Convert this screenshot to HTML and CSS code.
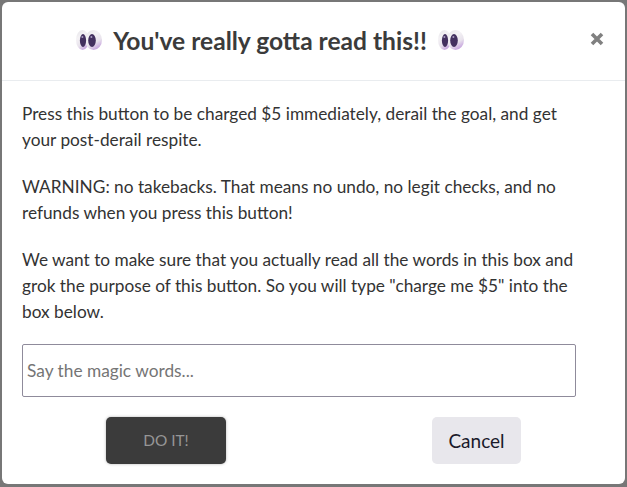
FILE: index.html
```html
<!DOCTYPE html>
<html lang="en">
<head>
    <meta charset="UTF-8">
    <meta name="viewport" content="width=device-width, initial-scale=1.0">
    <title>You've really gotta read this!!</title>
    <link rel="stylesheet" href="styles.css">
</head>
<body>

    <svg class="defs" width="0" height="0">
        <defs>
            <linearGradient id="eyeball" x1="0.1" y1="0" x2="0.6" y2="1">
                <stop offset="0" stop-color="#e6e4e8"/>
                <stop offset="0.35" stop-color="#f4f2f5"/>
                <stop offset="0.7" stop-color="#e8e2ec"/>
                <stop offset="1" stop-color="#c6a3de"/>
            </linearGradient>
            <symbol id="eyes" viewBox="0 0 26 20">
                <ellipse cx="6.5" cy="10" rx="6.5" ry="10" fill="url(#eyeball)"/>
                <ellipse cx="17.5" cy="10" rx="8.5" ry="10" fill="url(#eyeball)"/>
                <ellipse cx="7" cy="10.5" rx="3.1" ry="6.5" fill="#43305f"/>
                <ellipse cx="16" cy="10.5" rx="3.8" ry="6.5" fill="#43305f"/>
                <circle cx="6.4" cy="7" r="1" fill="#a99cc0"/>
                <circle cx="15.4" cy="7" r="1" fill="#a99cc0"/>
            </symbol>
        </defs>
    </svg>

    <div class="modal">
        <div class="modal-header">
            <h1>
                <svg class="eyes"><use href="#eyes"/></svg>
                <span>You've really gotta read this!!</span>
                <svg class="eyes"><use href="#eyes"/></svg>
            </h1>
            <button class="close">
                <svg width="14" height="14" viewBox="0 0 14 14"><path d="M2 2 L12 12 M12 2 L2 12" stroke="#808080" stroke-width="3.6" fill="none"/></svg>
            </button>
        </div>

        <div class="modal-body">
            <p>Press this button to be charged $5 immediately, derail the goal, and get your post-derail respite.</p>
            <p>WARNING: no takebacks. That means no undo, no legit checks, and no refunds when you press this button!</p>
            <p>We want to make sure that you actually read all the words in this box and grok the purpose of this button. So you will type "charge me $5" into the box below.</p>
            <input class="magic" type="text" placeholder="Say the magic words...">
            <div class="actions">
                <button class="do-it">DO IT!</button>
                <button class="cancel">Cancel</button>
            </div>
        </div>
    </div>

</body>
</html>
```

FILE: styles.css
```css
html, body {
    margin: 0;
    padding: 0;
    height: 100%;
    overflow: hidden;
}

body {
    background-color: #777;
    font-family: "Lato", "Noto Sans", sans-serif;
    color: #333;
    padding: 2px 2px 3px 2px;
    box-sizing: border-box;
}

.defs {
    display: block;
}

.modal {
    background-color: white;
    border-radius: 6px;
    height: 100%;
}

.modal-header {
    display: flex;
    align-items: center;
    height: 78px;
    border-bottom: 1px solid #e9ecef;
    padding-right: 21px;
}

.modal-header h1 {
    flex: 1;
    display: flex;
    align-items: center;
    justify-content: center;
    gap: 11px;
    margin: 0 0 2px 0;
    padding-right: 52px;
    font-size: 24.6px;
    font-weight: 700;
    color: #3b3b3b;
}

.eyes {
    width: 26px;
    height: 20px;
}

.close {
    background: none;
    border: none;
    padding: 0;
    display: flex;
    margin-bottom: 5px;
}

.modal-body {
    padding: 20px 49px 0 20px;
}

.modal-body p {
    margin: 0 0 20px 0;
    font-size: 17.25px;
    line-height: 26.4px;
}

.magic {
    display: block;
    width: 100%;
    height: 53px;
    box-sizing: border-box;
    border: 1px solid #8f8b9b;
    border-radius: 2px;
    padding: 0 4px;
    margin-top: -2px;
    font-family: inherit;
    font-size: 17.3px;
    color: #333;
}

.magic::placeholder {
    color: #757575;
}

.actions {
    display: flex;
    justify-content: space-between;
    margin-top: 20px;
    padding: 0 55px 0 84px;
}

.actions button {
    border: none;
    border-radius: 5px;
    height: 47px;
    font-family: inherit;
}

.do-it {
    width: 120px;
    background-color: #3b3b3b;
    color: #969696;
    font-size: 15.4px;
    box-shadow: 0 0 3px rgba(0, 0, 0, 0.3);
}

.cancel {
    width: 89px;
    background-color: #e8e7ec;
    color: #1a1a2a;
    font-size: 19px;
}
```
